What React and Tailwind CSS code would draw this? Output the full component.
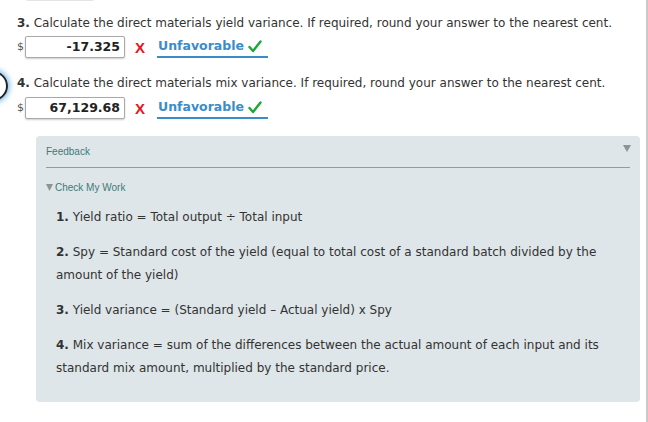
import React from "react";

const V = { fontFamily: '"DejaVu Sans", Verdana, sans-serif' };
const A = { fontFamily: '"Liberation Sans", Arial, sans-serif' };

function Answer({ value }) {
  return (
    <div className="flex items-center h-[22px]">
      <span className="text-[11px] text-[#555] w-[8px]" style={V}>$</span>
      <div
        className="w-[100px] h-[22px] border border-[#a9a9a9] rounded-[2px] bg-white shadow-[0_1px_2px_rgba(0,0,0,0.2)] flex items-center justify-end pr-[4px] text-[12.5px] font-bold text-[#222]"
        style={V}
      >
        {value}
      </div>
      <span className="ml-[10px] text-[#e8141b] font-bold text-[15px] leading-none" style={A}>X</span>
      <div className="ml-[12px] w-[111px] h-[22px] border-b-2 border-[#3b8ccb] flex items-center pl-[1px]">
        <span className="text-[12.5px] font-bold text-[#3b8ccb]" style={V}>Unfavorable</span>
        <svg width="14" height="13" viewBox="0 0 14 13" className="ml-[4px]">
          <path d="M1.5 7 L5 11 L12.5 1.5" fill="none" stroke="#1fa83a" strokeWidth="2.4" strokeLinecap="round" strokeLinejoin="round" />
        </svg>
      </div>
    </div>
  );
}

export default function App() {
  return (
    <div className="relative w-[648px] h-[422px] bg-white overflow-hidden text-[#333]" style={V}>
      <div className="absolute left-[25px] top-[-10px] w-[70px] h-[11px] border border-[#e4e4e4] rounded-[3px]" />
      <div className="absolute right-0 top-0 w-[2px] h-full bg-[#c9c9c9]" />
      <div className="absolute left-[-22px] top-[71px] w-[30px] h-[30px] rounded-full border-2 border-[#222] shadow-[0_0_5px_2px_rgba(80,170,240,0.7)]" />

      <div className="pl-[17px] pt-[13px]">
        <p className="text-[12px] leading-[20px] whitespace-nowrap"><b>3.</b> Calculate the direct materials yield variance. If required, round your answer to the nearest cent.</p>
        <div className="mt-[3px]"><Answer value="-17.325" /></div>
        <p className="mt-[15px] text-[12px] leading-[20px] whitespace-nowrap"><b>4.</b> Calculate the direct materials mix variance. If required, round your answer to the nearest cent.</p>
        <div className="mt-[4px]"><Answer value="67,129.68" /></div>
      </div>

      <div className="ml-[36px] mt-[17px] w-[604px] h-[266px] bg-[#dee6e9] rounded-[4px] pt-[8px] pl-[10px] pr-[10px]">
        <div className="flex items-center justify-between h-[14px]">
          <span className="text-[10px] text-[#3f7a78]" style={A}>Feedback</span>
          <svg width="8" height="7" viewBox="0 0 8 7" className="mr-[-1px] mt-[-6px]">
            <path d="M0 0 L8 0 L4 7 Z" fill="#8d9396" />
          </svg>
        </div>
        <div className="mt-[9px] h-[1px] bg-[#959b9d]" />
        <div className="mt-[12px] flex items-center h-[14px] text-[10px] text-[#3f7a78]" style={A}>
          <svg width="7" height="7" viewBox="0 0 7 7" className="mr-[2px]">
            <path d="M0 0 L7 0 L3.5 7 Z" fill="#8d9396" />
          </svg>
          Check My Work
        </div>
        <div className="pl-[10px] pr-[20px] text-[12px] leading-[23px] text-[#333]">
          <p className="mt-[12px]"><b>1.</b> Yield ratio = Total output ÷ Total input</p>
          <p className="mt-[12px]"><b>2.</b> Spy = Standard cost of the yield (equal to total cost of a standard batch divided by the amount of the yield)</p>
          <p className="mt-[12px]"><b>3.</b> Yield variance = (Standard yield – Actual yield) x Spy</p>
          <p className="mt-[12px]"><b>4.</b> Mix variance = sum of the differences between the actual amount of each input and its standard mix amount, multiplied by the standard price.</p>
        </div>
      </div>
    </div>
  );
}
